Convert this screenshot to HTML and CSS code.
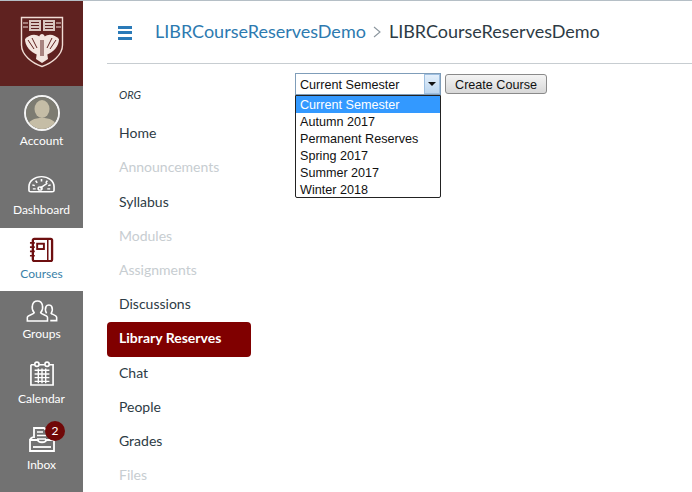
FILE: index.html
```html
<!DOCTYPE html>
<html lang="en">
<head>
    <meta charset="UTF-8">
    <title>LIBRCourseReservesDemo</title>
    <link rel="stylesheet" href="styles.css">
</head>
<body>
    <div class="page">
        <nav class="global-nav">
            <div class="logo">
                <svg width="44" height="52" viewBox="0 0 44 52">
                    <path d="M1.500 1.500H42.500V29C42.500 39 32 47 22 50.500C12 47 1.500 39 1.500 29Z" fill="#5f2220" stroke="#f0dcd4" stroke-width="1.400"/>
                    <path d="M9 4H35V15H9Z" fill="#d9c6bf"/>
                    <path d="M21 4H23V15H21Z" fill="#5f2220"/>
                    <path d="M11 6.500H19M11 9.500H19M11 12.500H19M25 6.500H33M25 9.500H33M25 12.500H33" stroke="#5f2220" stroke-width="1"/>
                    <path d="M3 7H8M3 11H8M36 7H41M36 11H41" stroke="#f0dcd4" stroke-width="1.200"/>
                    <path d="M20 21C15 17 9 19 5 23C5 30 10 36 18 39L20 35Z" fill="#f3e6e0"/>
                    <path d="M24 21C29 17 35 19 39 23C39 30 34 36 26 39L24 35Z" fill="#f3e6e0"/>
                    <path d="M19 21C20 17 24 17 25 21L27 36L28 43L22 47L16 43L17 36Z" fill="#f3e6e0"/>
                    <path d="M8 24L14 33M12 22L17 32M36 24L30 33M32 22L27 32M21 24V40M23 24V40" stroke="#5f2220" stroke-width="1"/>
                </svg>
            </div>
            <a class="nav-item account">
                <span class="avatar">
                    <svg width="32" height="32" viewBox="0 0 32 32">
                        <circle cx="16" cy="16" r="16" fill="#7d7c72"/>
                        <ellipse cx="16" cy="12" rx="7.500" ry="9" fill="#c5bda6"/>
                        <path d="M1 32C1 23 9 21 16 21C23 21 31 23 31 32Z" fill="#c5bda6"/>
                    </svg>
                </span>
                <span>Account</span>
            </a>
            <a class="nav-item dashboard">
                <svg width="27" height="18" viewBox="0 0 28 22" preserveAspectRatio="none" fill="none" stroke="#fff" stroke-width="1.700">
                    <path d="M1 19V14C1 7 7 2 14 2C21 2 27 7 27 14V19C27 20 26 20.500 25 20.500H3C2 20.500 1 20 1 19Z"/>
                    <path d="M14 5V8M8 7L9.500 9.500M20 7L18.500 9.500M4.500 12L7 13M23.500 12L21 13M5 17H8M20 17H23"/>
                    <path d="M12.500 16L20 10"/>
                    <circle cx="12.500" cy="16.500" r="2"/>
                </svg>
                <span>Dashboard</span>
            </a>
            <a class="nav-item courses active">
                <svg width="25" height="25" viewBox="0 0 26 26" fill="none" stroke="#6e0f10" stroke-width="2.400">
                    <rect x="4" y="2" width="20" height="23" rx="1.500"/>
                    <path d="M19.500 2V25" stroke-width="1.600"/>
                    <rect x="8.500" y="7" width="7" height="5.500" stroke-width="2"/>
                    <path d="M1 6H6M1 10.500H6M1 15H6M1 19.500H6" stroke-width="1.800"/>
                </svg>
                <span>Courses</span>
            </a>
            <a class="nav-item groups">
                <svg width="32" height="22" viewBox="0 0 34 24" fill="none" stroke="#fff" stroke-width="1.700">
                    <path d="M1 23V19C1 16.500 8 15.500 8.500 14C6 11 6 8 6.500 6C7 3 9.500 1 12 1C15 1 17 3 17.500 6C18 8 18 11 15.500 14C16 15.500 23 16.500 23 19V23Z"/>
                    <path d="M22 14.500C20.500 12 20.500 9 21.500 7C22.500 5 26.500 5 27.500 7C28.500 9 28.500 12 27 14.500C27.500 15.500 33 16.500 33 19V22.500H26"/>
                </svg>
                <span>Groups</span>
            </a>
            <a class="nav-item calendar">
                <svg width="24" height="25" viewBox="0 0 26 27" fill="none" stroke="#fff" stroke-width="1.800">
                    <path d="M1 4H5M10 4H16M21 4H25V26H1V4"/>
                    <circle cx="7.500" cy="3.500" r="2.300"/>
                    <circle cx="18.500" cy="3.500" r="2.300"/>
                    <path d="M5 10H21M5 14H21M5 18H21M5 22H21M9 8V24M13 8V24M17 8V24" stroke-width="1.500"/>
                </svg>
                <span>Calendar</span>
            </a>
            <a class="nav-item inbox">
                <svg width="26" height="25" viewBox="0 0 26 25" fill="none" stroke="#fff" stroke-width="1.800">
                    <path d="M5 11V1H15L20 6V11"/>
                    <path d="M8 5H14M8 8.500H17M8 12H17" stroke-width="1.500"/>
                    <path d="M1 12L4 10M25 12L22 10"/>
                    <path d="M1 13H9C9 16 17 16 17 13H25V24H1Z"/>
                    <path d="M4 20H22"/>
                </svg>
                <span>Inbox</span>
                <b class="badge">2</b>
            </a>
        </nav>

        <div class="main">
            <header class="top-bar">
                <div class="menu-icon"><i></i><i></i><i></i></div>
                <a class="crumb">LIBRCourseReservesDemo</a>
                <svg class="crumb-sep" width="8" height="12" viewBox="0 0 8 12" fill="none" stroke="#8b969e" stroke-width="1.100">
                    <path d="M1 1L7 6L1 11"/>
                </svg>
                <span class="crumb-current">LIBRCourseReservesDemo</span>
            </header>

            <div class="content">
                <aside class="course-nav">
                    <p class="term">ORG</p>
                    <ul>
                        <li>Home</li>
                        <li class="off">Announcements</li>
                        <li>Syllabus</li>
                        <li class="off">Modules</li>
                        <li class="off">Assignments</li>
                        <li>Discussions</li>
                        <li class="current">Library Reserves</li>
                        <li>Chat</li>
                        <li>People</li>
                        <li>Grades</li>
                        <li class="off">Files</li>
                    </ul>
                </aside>

                <section class="tool">
                    <div class="select-wrap">
                        <div class="select-box">
                            <span class="select-text">Current Semester</span>
                            <span class="select-arrow"></span>
                        </div>
                        <ul class="dropdown">
                            <li class="picked">Current Semester</li>
                            <li>Autumn 2017</li>
                            <li>Permanent Reserves</li>
                            <li>Spring 2017</li>
                            <li>Summer 2017</li>
                            <li>Winter 2018</li>
                        </ul>
                    </div>
                    <button class="create-btn">Create Course</button>
                </section>
            </div>
        </div>
    </div>
</body>
</html>
```

FILE: styles.css
```css
* {
    margin: 0;
    padding: 0;
    box-sizing: border-box;
}

html, body {
    height: 100%;
    overflow: hidden;
}

body {
    font-family: Lato, "Open Sans", sans-serif;
    background: white;
    color: #2d3b45;
}

.page {
    display: flex;
    height: 492px;
    border-top: 1px solid #b5bfc6;
}

/* left global nav */
.global-nav {
    width: 83px;
    flex-shrink: 0;
    background: #727272;
    display: flex;
    flex-direction: column;
}

.logo {
    height: 85px;
    background: #5f2220;
    display: flex;
    align-items: center;
    justify-content: center;
    padding-bottom: 3px;
}

.nav-item {
    position: relative;
    display: flex;
    flex-direction: column;
    align-items: center;
    justify-content: flex-end;
    color: white;
    font-size: 12px;
    line-height: 16px;
}

.account { height: 63px; }
.dashboard { height: 79px; gap: 9px; padding-bottom: 10px; }
.courses { height: 63px; gap: 4px; padding-bottom: 9px; }
.groups { height: 51px; gap: 4px; }
.calendar { height: 65px; gap: 5px; }
.inbox { height: 66px; gap: 5px; }

.active {
    background: white;
    color: #3a7fa8;
}

.avatar {
    width: 36px;
    height: 36px;
    border: 2px solid #f4f4f4;
    border-radius: 50%;
    overflow: hidden;
    margin-bottom: 2px;
}

.avatar svg {
    display: block;
}

.badge {
    position: absolute;
    top: 14px;
    left: 45px;
    width: 20px;
    height: 20px;
    border-radius: 50%;
    background: #700808;
    font-weight: normal;
    font-size: 12px;
    line-height: 20px;
    text-align: center;
}

/* header */
.main {
    flex: 1;
    padding-left: 24px;
}

.top-bar {
    height: 63px;
    border-bottom: 1px solid #c7cdd1;
    display: flex;
    align-items: center;
    padding: 0 0 2px 11px;
    font-size: 18px;
}

.menu-icon {
    width: 14px;
    margin: 3px 23px 0 0;
    display: flex;
    flex-direction: column;
    gap: 2.5px;
}

.menu-icon i {
    display: block;
    height: 3px;
    background: #2a7ab8;
}

.crumb {
    color: #2d7ab0;
}

.crumb-sep {
    margin: 2px 8px 0 7px;
}

.content {
    display: flex;
}

/* course nav */
.course-nav {
    width: 144px;
    flex-shrink: 0;
    font-size: 14px;
}

.term {
    font-size: 11px;
    font-style: italic;
    padding: 24px 0 0 12px;
    line-height: 14px;
}

.course-nav ul {
    list-style: none;
    margin-top: 15.2px;
}

.course-nav li {
    height: 34.2px;
    line-height: 31.4px;
    padding-left: 12px;
}

.course-nav li.off {
    color: #c7cdd1;
}

.course-nav li.current {
    background: #800000;
    color: white;
    font-weight: bold;
    border-radius: 4px;
    line-height: 32px;
}

/* semester picker */
.tool {
    margin-left: 44px;
    padding-top: 9px;
    display: flex;
    align-items: flex-start;
    gap: 4px;
    font-family: "Liberation Sans", Arial, sans-serif;
    font-size: 12.6px;
    color: #111;
}

.select-wrap {
    position: relative;
    width: 146px;
}

.select-box {
    height: 22px;
    border: 1px solid #7f9db9;
    background: white;
    display: flex;
    align-items: center;
    justify-content: space-between;
    padding-left: 4px;
}

.select-text {
    padding-top: 2px;
}

.select-arrow {
    width: 16px;
    height: 20px;
    background: linear-gradient(#e3effb, #bcd6ef);
    border: 1px solid #9ebfe0;
    position: relative;
}

.select-arrow::after {
    content: '';
    position: absolute;
    left: 3px;
    top: 7px;
    border: 4px solid transparent;
    border-top: 4px solid #111;
}

.dropdown {
    position: absolute;
    top: 22px;
    left: 0;
    width: 146px;
    height: 103px;
    list-style: none;
    background: white;
    border: 1px solid #222;
    border-radius: 0 0 2px 2px;
}

.dropdown li {
    height: 17px;
    line-height: 19px;
    padding-left: 4px;
}

.dropdown li.picked {
    background: #3399ff;
    color: white;
}

.create-btn {
    width: 102px;
    height: 20px;
    margin-top: 1px;
    padding-top: 2px;
    border: 1px solid #8a8a8a;
    border-radius: 3px;
    background: linear-gradient(#f4f4f4, #d8d8d8);
    font-family: inherit;
    font-size: 12.6px;
    color: #111;
}
```
